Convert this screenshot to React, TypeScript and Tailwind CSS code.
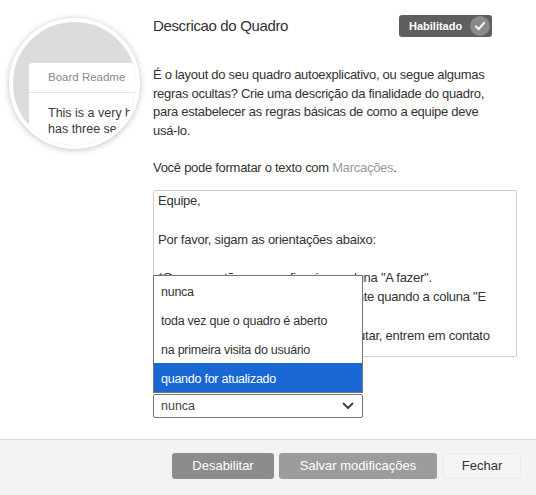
import React from "react";

const font = { fontFamily: '"Liberation Sans", Arial, sans-serif' };

function Circle() {
  return (
    <div className="ml-[9px] mt-[18px] w-[131px] h-[131px] rounded-full border-[4px] border-white shadow-[0_1px_6px_rgba(0,0,0,0.25)] overflow-hidden bg-[#dcdcdc] relative">
      <div className="absolute left-[16px] top-[41px] w-[140px] h-[120px] bg-white rounded-[3px]">
        <div className="h-[30px] border-b border-[#e6e6e6] pl-[19px] flex items-center text-[11.5px] text-[#8a8a8a]">
          Board Readme
        </div>
        <div className="pl-[19px] pt-[12px] text-[12.5px] leading-[16px] text-[#3a3a3a] whitespace-nowrap">
          <div>This is a very brief</div>
          <div>has three sections</div>
        </div>
      </div>
    </div>
  );
}

function Check() {
  return (
    <svg width="12" height="12" viewBox="0 0 12 12">
      <path d="M2 6.5 L4.8 9.2 L10 2.8" fill="none" stroke="white" strokeWidth="2" strokeLinecap="round" strokeLinejoin="round" />
    </svg>
  );
}

function Chevron() {
  return (
    <svg width="12" height="8" viewBox="0 0 12 8">
      <path d="M1.5 1.5 L6 6 L10.5 1.5" fill="none" stroke="#444" strokeWidth="2" strokeLinecap="round" strokeLinejoin="round" />
    </svg>
  );
}

export default function App() {
  const lines = [
    "Equipe,",
    "",
    "Por favor, sigam as orientações abaixo:",
    "",
    '*O novo cartão sempre ficará na coluna "A fazer".',
    '*Movam seus cartões adiante somente quando a coluna "E',
    'm andamento" estiver livre.',
    "*Havendo dúvidas sobre como executar, entrem em contato",
    "comigo.",
  ];
  const options = ["nunca", "toda vez que o quadro é aberto", "na primeira visita do usuário", "quando for atualizado"];
  return (
    <div style={font} className="w-[536px] h-[495px] bg-white flex flex-col text-[#333] overflow-hidden">
      <div className="flex-1 flex">
        <div className="w-[153px] shrink-0">
          <Circle />
        </div>
        <div className="w-[364px] pt-[15px] flex flex-col">
          <div className="flex items-center justify-between mr-[25px]">
            <div className="text-[15px] leading-[20px] tracking-[-0.35px]">Descricao do Quadro</div>
            <div className="h-[22px] w-[93px] rounded-[3px] bg-[#5f5f5f] flex items-center pl-[10px] pr-[2px] justify-between">
              <span className="text-[11px] font-bold text-white">Habilitado</span>
              <span className="w-[20px] h-[20px] rounded-full bg-[#8a8a8a] flex items-center justify-center">
                <Check />
              </span>
            </div>
          </div>
          <div className="mt-[29px] w-[345px] text-[13px] leading-[18.5px] tracking-[-0.28px]">
            <p>
              É o layout do seu quadro autoexplicativo, ou segue algumas regras ocultas? Crie uma descrição da finalidade do quadro, para estabelecer as regras básicas de como a equipe deve usá-lo.
            </p>
            <p className="mt-[18.5px]">
              Você pode formatar o texto com <span className="text-[#999]">Marcações</span>.
            </p>
          </div>
          <div className="relative mt-[13px]">
            <div className="h-[167px] border border-[#cfcfcf] rounded-[2px] overflow-hidden pl-[4px] text-[13px] leading-[19.3px] tracking-[-0.25px] text-[#333] whitespace-pre">
              {lines.map((l, i) => (
                <div key={i}>{l || " "}</div>
              ))}
            </div>
            <div className="absolute left-0 top-[85px] w-[210px] border border-[#767676] bg-white">
              {options.map((o, i) => (
                <div
                  key={o}
                  className={
                    "h-[29px] flex items-center pl-[7px] pt-[3px] text-[12.5px] tracking-[-0.25px] " +
                    (i === 3 ? "bg-[#1967d2] text-white" : "text-[#333]")
                  }
                >
                  {o}
                </div>
              ))}
            </div>
          </div>
          <div className="mt-[37px] w-[210px] h-[24px] border border-[#767676] rounded-[2px] flex items-center justify-between pl-[7px] pr-[8px] text-[12.5px] text-[#444]">
            <span>nunca</span>
            <Chevron />
          </div>
        </div>
      </div>
      <div className="h-[56px] shrink-0 border-t border-[#dcdcdc] bg-[#f3f3f3] flex items-start justify-end pt-[13px] pr-[15px]">
        <button className="h-[26px] w-[102px] rounded-[3px] bg-[#8c8c8c] text-white text-[13px]">Desabilitar</button>
        <button className="ml-[5px] h-[26px] w-[158px] rounded-[3px] bg-[#9c9c9c] text-white text-[13px]">Salvar modificações</button>
        <button className="ml-[6px] h-[26px] w-[78px] rounded-[3px] bg-[#f4f4f4] border border-[#ebebeb] text-[#333] text-[13px]">Fechar</button>
      </div>
    </div>
  );
}
